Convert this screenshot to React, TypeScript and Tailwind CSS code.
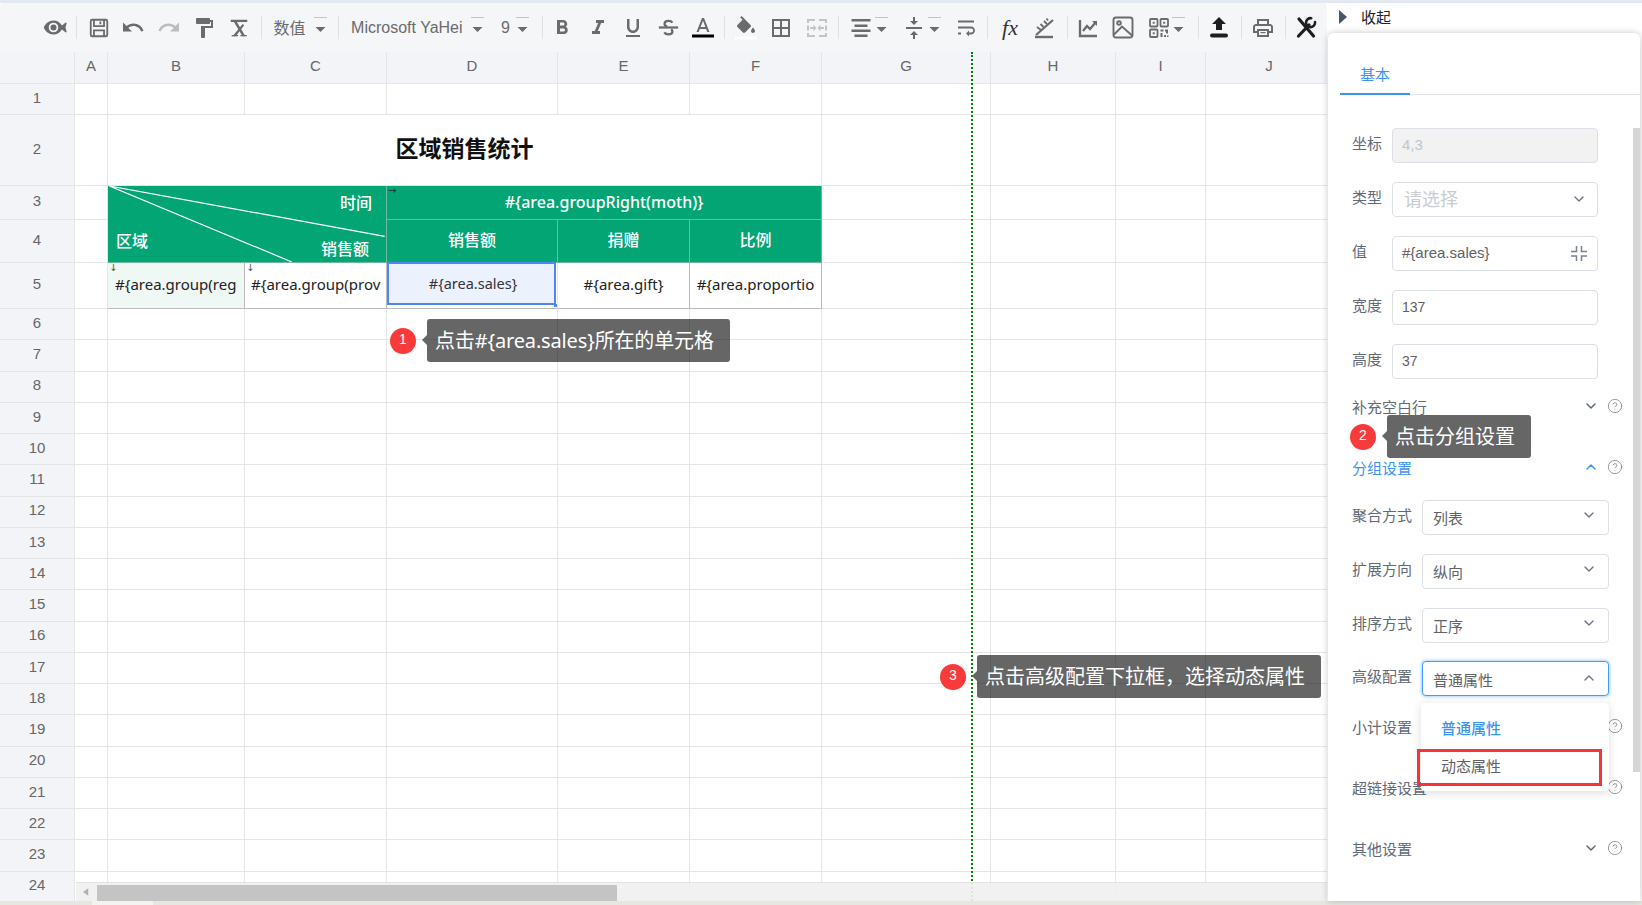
import { ChevronDown, ChevronUp, CircleHelp } from 'lucide-react'
import type { ReactNode } from 'react'

const FONT = "[font-family:'Noto_Sans','Noto_Sans_CJK_SC',sans-serif]"
const ARIAL = "[font-family:'Liberation_Sans','Noto_Sans_CJK_SC',sans-serif]"

function Sep({ className }: { className: string }) {
    return <div className={`w-px h-[23px] bg-[#e0e1e4] shrink-0 ${className}`} />
}

function Caret({ className }: { className: string }) {
    return (
        <svg viewBox="0 0 13 16" className={`w-[13px] h-4 mb-[6px] shrink-0 ${className}`}>
            <rect x="0" y="0" width="13" height="1" fill="#c4c4c4" />
            <path d="M1.5 10h10l-5 5z" fill="#6b6b6b" />
        </svg>
    )
}

function Ico({ className, size = 24, color = '#6b6b6b', children }: { className: string; size?: number; color?: string; children: ReactNode }) {
    return (
        <div className={`w-6 h-6 flex items-center justify-center shrink-0 ${className}`}>
            <svg viewBox="0 0 24 24" width={size} height={size} fill={color} stroke="none">{children}</svg>
        </div>
    )
}

function Toolbar() {
    return (
        <div className="h-[49px] bg-[#f5f6f8] rounded-t-[4px] flex items-center pl-[43px] shrink-0 text-[#6b6b6b]">
            <Ico className="" size={25}>
                <path d="M10.5 5C6 5 2.3 8 .8 12c1.5 4 5.2 7 9.7 7 3.4 0 6.6-1.9 8.5-5l3.7 3 1-.5-1.2-4.500 1.200-4.500-1-.5-3.700 3C17.100 6.900 13.900 5 10.500 5zm0 2.200a4.800 4.800 0 1 1 0 9.600 4.800 4.800 0 0 1 0-9.600z" />
                <circle cx="10.500" cy="12" r="3" />
            </Ico>
            <Sep className="ml-[9px]" />
            <Ico className="ml-[9.5px]" size={22}>
                <path fillRule="evenodd" d="M4.500 2h15A2.500 2.500 0 0 1 22 4.500v15a2.500 2.500 0 0 1-2.500 2.500h-15A2.500 2.500 0 0 1 2 19.500v-15A2.500 2.500 0 0 1 4.500 2zM4 4v16h1.500v-6.500h13V20H20V4h-1.500v7h-13V4zm3.500 0v5h9V4zm5 1h2v3h-2zM7.500 15.500V20h9v-4.500z" />
            </Ico>
            <Ico className="ml-[10.5px]" size={25}>
                <path d="M12.500 8c-2.650 0-5.050.99-6.900 2.600L2 7v9h9l-3.620-3.620c1.390-1.160 3.160-1.880 5.120-1.880 3.540 0 6.550 2.310 7.600 5.500l2.370-.78C21.080 11.030 17.150 8 12.500 8z" />
            </Ico>
            <Ico className="ml-[12px]" size={25} color="#bcbcbc">
                <path d="M18.400 10.600C16.550 8.990 14.150 8 11.500 8c-4.650 0-8.580 3.030-9.960 7.220L3.900 16c1.050-3.190 4.050-5.500 7.600-5.500 1.950 0 3.730.72 5.120 1.880L13 16h9V7l-3.600 3.600z" />
            </Ico>
            <Ico className="ml-[11px]">
                <path d="M18 4V3c0-.55-.45-1-1-1H5c-.55 0-1 .45-1 1v4c0 .55.45 1 1 1h12c.55 0 1-.45 1-1V6h1v4H9v11c0 .55.45 1 1 1h2c.55 0 1-.45 1-1v-9h8V4h-3z" />
            </Ico>
            <Ico className="ml-[10.6px]" size={22}>
                <path d="M3 3h18v2.500H3z" />
                <path d="M6 4.500h3.200L19 21h-3.200z" />
                <path d="M16 7.500l1.700 1.500L8.500 21H5z" />
                <path d="M4 19.500h7v1.500H4zM13.500 19.500h7v1.500h-7z" />
            </Ico>
            <Sep className="ml-[10px]" />
            <span className="ml-[12px] w-8 text-[16px] whitespace-nowrap shrink-0 leading-6">数值</span>
            <Caret className="ml-[8px]" />
            <Sep className="ml-[11px]" />
            <span className={`ml-[12.500px] w-[113px] text-[16px] whitespace-nowrap shrink-0 ${ARIAL}`}>Microsoft YaHei</span>
            <Caret className="ml-[6.500px]" />
            <span className={`ml-[17.500px] w-2 text-[16px] shrink-0 ${ARIAL}`}>9</span>
            <Caret className="ml-[7px]" />
            <Sep className="ml-[12.500px]" />
            <Ico className="ml-[7.500px]" size={30}>
                <path d="M15.600 10.790c.97-.67 1.650-1.770 1.650-2.790 0-2.260-1.750-4-4-4H7v14h7.040c2.090 0 3.710-1.700 3.710-3.790 0-1.520-.86-2.820-2.150-3.420zM10 6.500h3c.83 0 1.500.67 1.500 1.500s-.67 1.500-1.500 1.500h-3v-3zm3.500 9H10v-3h3.500c.83 0 1.500.67 1.500 1.500s-.67 1.500-1.500 1.500z" />
            </Ico>
            <Ico className="ml-[11.600px]" size={26}>
                <path d="M10 4v3h2.210l-3.420 8H6v3h8v-3h-2.210l3.420-8H18V4z" />
            </Ico>
            <Ico className="ml-[11.400px]" size={26}>
                <path d="M12 17c3.310 0 6-2.690 6-6V3h-2.500v8c0 1.930-1.570 3.500-3.500 3.500S8.500 12.930 8.500 11V3H6v8c0 3.310 2.690 6 6 6zm-7 2v2h14v-2H5z" />
            </Ico>
            <Ico className="ml-[11.700px]" size={21}>
                <g fill="none" stroke="#6b6b6b" strokeWidth="2.600">
                    <path d="M16.500 6.500C15.500 5 13.800 4.500 12 4.500c-2.500 0-4.500 1.200-4.500 3.300 0 1.700 1 2.700 3 3.200" />
                    <path d="M15 14c1 .8 1.500 1.500 1.500 2.500 0 2-2 3.300-4.500 3.300-2 0-3.800-.7-4.800-2.300" />
                    <path d="M1 12h22" />
                </g>
            </Ico>
            <Ico className="ml-[10.300px]" size={26}>
                <path d="M11 2 5.500 16h2.250l1.120-3h6.250l1.120 3h2.250L13 2h-2zm-1.380 9L12 4.670 14.380 11H9.620z" />
                <rect x="1" y="18.500" width="22" height="3" fill="#000" />
            </Ico>
            <Sep className="ml-[9.400px]" />
            <Ico className="ml-[8.600px]" size={26}>
                <path d="M16.560 8.940 7.620 0 6.210 1.410l2.380 2.380-5.150 5.150c-.59.59-.59 1.540 0 2.120l5.500 5.500c.29.29.68.44 1.060.44s.77-.15 1.060-.44l5.500-5.500c.59-.58.59-1.530 0-2.120zM19 11.500s-2 2.170-2 3.500c0 1.100.9 2 2 2s2-.9 2-2c0-1.330-2-3.500-2-3.500z" />
                <rect x="1" y="20.500" width="22" height="3" fill="#fff" />
            </Ico>
            <Ico className="ml-[11.400px]" size={26}>
                <path d="M3 3v18h18V3H3zm8 16H5v-6h6v6zm0-8H5V5h6v6zm8 8h-6v-6h6v6zm0-8h-6V5h6v6z" />
            </Ico>
            <Ico className="ml-[11.200px]" size={26} color="#c4c4c4">
                <path d="M2 3h8v2H4v2H2zM14 3h8v4h-2V5h-6zM2 17h2v2h6v2H2zM20 17h2v4h-8v-2h6zM2 9.500h2v5H2zM20 9.500h2v5h-2z" />
                <path d="M5 11h3.500V8.500l3 3.500-3 3.500V13H5zM19 11h-3.500V8.500l-3 3.500 3 3.500V13H19z" />
            </Ico>
            <Sep className="ml-[9.700px]" />
            <Ico className="ml-[9.700px]" size={24}>
                <path d="M2.500 3h19v2.600h-19zM5.500 8.500h13v2.600h-13zM2.500 13.500h19v2.600h-19zM5.500 18.500h13v2.600h-13z" />
            </Ico>
            <Caret className="ml-[2px]" />
            <Ico className="ml-[14px]" size={26}>
                <path d="M8 19h3v4h2v-4h3l-4-4-4 4zm8-14h-3V1h-2v4H8l4 4 4-4zM4 11v2h16v-2H4z" />
            </Ico>
            <Caret className="ml-[1.500px]" />
            <Ico className="ml-[13.300px]" size={25}>
                <path d="M4 19h3v-2H4v2zM20 5H4v2h16V5zm-3 6H4v2h13.250c1.100 0 2 .9 2 2s-.9 2-2 2H15v-2l-3 3 3 3v-2h2c2.210 0 4-1.790 4-4s-1.790-4-4-4z" />
            </Ico>
            <Sep className="ml-[9.700px]" />
            <div className="ml-[9.500px] w-6 h-6 flex items-center justify-center shrink-0 text-[#333] text-[22px] italic [font-family:'Liberation_Serif',serif]">fx</div>
            <Ico className="ml-[10.500px]" size={26}>
                <g fill="none" stroke="#6b6b6b" strokeWidth="2">
                    <path d="M4 19 21 4" strokeWidth="2.200" />
                    <path d="M3 21h18" strokeWidth="2.400" />
                    <path d="M5 11l4 3M8.500 8l3 3M12 5l3 3M14.500 2.500l1.500 2" strokeWidth="1.800" />
                </g>
            </Ico>
            <Sep className="ml-[10.200px]" />
            <Ico className="ml-[8.300px]" size={26}>
                <g fill="none" stroke="#6b6b6b" strokeWidth="2.300">
                    <path d="M4 4v16h17" />
                    <path d="M7 15l4-5 3 3 6-7" />
                </g>
                <path d="M16 5h5v5z" />
            </Ico>
            <Ico className="ml-[11px]" size={27}>
                <g fill="none" stroke="#6b6b6b" strokeWidth="1.900">
                    <rect x="2.500" y="2" width="19" height="20" rx="2.500" />
                    <circle cx="8" cy="7.500" r="1.800" />
                    <path d="M3 19l8-8 10 9" />
                </g>
            </Ico>
            <Ico className="ml-[12px]" size={26}>
                <g fill="none" stroke="#6b6b6b" strokeWidth="1.800">
                    <rect x="3" y="3" width="7.500" height="7.500" rx="1" />
                    <rect x="13.500" y="3" width="7.500" height="7.500" rx="1" />
                    <rect x="3" y="13.500" width="7.500" height="7.500" rx="1" />
                </g>
                <path d="M5.700 5.700h2v2h-2zM16.200 5.700h2v2h-2zM5.700 16.200h2v2h-2zM13.500 13.500h3v2h-3zM18 13.500h3v4h-2v-2h-1zM13.500 17h2v4h-2zM17 19h2v2h-2zM20 19.500h1.500V21H20z" />
            </Ico>
            <Caret className="ml-[1.500px]" />
            <Sep className="ml-[12.100px]" />
            <Ico className="ml-[8.800px]" size={26} color="#1e1e1e">
                <path d="M9 14h6V8h4l-7-7-7 7h4v6z" />
                <rect x="3" y="17.500" width="18" height="4" rx="2" />
            </Ico>
            <Sep className="ml-[10.100px]" />
            <Ico className="ml-[8.500px]" size={28}>
                <path d="M19 8h-1V3H6v5H5c-1.660 0-3 1.340-3 3v6h4v4h12v-4h4v-6c0-1.660-1.340-3-3-3zM8 5h8v3H8V5zm8 14H8v-4h8v4zm2-4v-2H6v2H4v-4c0-.55.45-1 1-1h14c.55 0 1 .45 1 1v4h-2z" />
                <rect x="9.500" y="16" width="5" height="1.200" />
            </Ico>
            <Sep className="ml-[9.600px]" />
            <Ico className="ml-[8.400px]" size={25} color="#1e1e1e">
                <g fill="none" stroke="#1e1e1e" strokeLinecap="round">
                    <path d="M5 3.500 19.500 20.500" strokeWidth="3.200" />
                    <path d="M4.500 20.500 15 9.500" strokeWidth="3.200" />
                    <path d="M21 6.500a4.500 4.500 0 1 1-3.800-3.800" strokeWidth="2.600" />
                </g>
            </Ico>
        </div>
    )
}

const cols = ['A', 'B', 'C', 'D', 'E', 'F', 'G', 'H', 'I', 'J']
const line = 'border-r border-b border-[#e5e5e5]'
const headCell = `${line} bg-[#f3f4f8] flex items-center justify-center pb-[2px] text-[15px] text-[#666] ${ARIAL}`

function Blank({ n }: { n: number }) {
    return <>{Array.from({ length: n }, (_, i) => <div key={i} className={line} />)}</>
}

function RowHead({ n, active }: { n: number; active?: boolean }) {
    return <div className={`${headCell} ${active ? 'bg-[#e6ecf8]' : ''}`}>{n}</div>
}

const greenCell = 'bg-[#03a574] border-r border-b border-[#72b8a0] flex items-center justify-center text-white text-[16px] font-medium'
const dataCell = 'border-r border-b border-[#bbbbbb] flex items-center pb-[2px] text-[15px] text-[#222] whitespace-nowrap overflow-hidden relative'

function Sheet() {
    return (
        <div className="flex-1 relative overflow-hidden">
            <div className="grid grid-cols-[75px_33px_137px_142px_171px_132px_132px_169px_125px_90px_127px] grid-rows-[32px_31px_71px_34px_43px_46px_repeat(19,31.250px)] w-[1333px]">
                <div className={headCell} />
                {cols.map(c => (
                    <div key={c} className={`${headCell} ${c === 'D' ? 'bg-[#e6ecf8]' : ''}`}>{c}</div>
                ))}

                <RowHead n={1} />
                <Blank n={10} />

                <RowHead n={2} />
                <Blank n={1} />
                <div className={`${line} col-span-5 flex items-center justify-center pb-[3px] text-[23px] font-bold text-[#111]`}>区域销售统计</div>
                <Blank n={4} />

                <RowHead n={3} />
                <Blank n={1} />
                <div className="col-span-2 row-span-2 bg-[#03a574] border-r border-b border-[#72b8a0] relative text-white text-[16px] font-medium">
                    <svg viewBox="0 0 279 77" className="absolute inset-0 w-full h-full">
                        <path d="M0 0 279 51M0 0 185 77" stroke="#fff" strokeWidth="1.200" fill="none" />
                    </svg>
                    <span className="absolute right-[14px] top-[5px] leading-6">时间</span>
                    <span className="absolute left-[213px] top-[51px] leading-6">销售额</span>
                    <span className="absolute left-2 top-[43px] leading-6">区域</span>
                </div>
                <div className={`col-span-3 ${greenCell} pb-[2px] relative`}>
                    <span className="absolute left-px top-0 text-[10px] leading-none text-[#26302c] [font-family:'DejaVu_Sans',sans-serif]">→</span>
                    {'#{area.groupRight(moth)}'}
                </div>
                <Blank n={4} />

                <RowHead n={4} />
                <Blank n={1} />
                <div className={`${greenCell} pb-[2px]`}>销售额</div>
                <div className={`${greenCell} pb-[2px]`}>捐赠</div>
                <div className={`${greenCell} pb-[2px]`}>比例</div>
                <Blank n={4} />

                <RowHead n={5} active />
                <Blank n={1} />
                <div className={`${dataCell} bg-[#f0f8f5] pl-[7px]`}>
                    <span className="absolute left-px top-0 text-[10px] leading-none text-[#555] [font-family:'DejaVu_Sans',sans-serif]">↓</span>
                    {'#{area.group(reg'}
                </div>
                <div className={`${dataCell} pl-[6px]`}>
                    <span className="absolute left-px top-0 text-[10px] leading-none text-[#555] [font-family:'DejaVu_Sans',sans-serif]">↓</span>
                    {'#{area.group(prov'}
                </div>
                <div className={`${line} border-b-[#bbbbbb] relative`}>
                    <div className="w-[169px] h-[43px] -mt-px border-2 border-[#4d86f5] bg-[#ebf1fd] flex items-center justify-center pl-[3px] text-[14.500px] text-[#333]">{'#{area.sales}'}</div>
                    <div className="absolute left-[167px] top-[41px] w-[3px] h-[3px] bg-[#4d86f5]" />
                </div>
                <div className={`${dataCell} justify-center`}>{'#{area.gift}'}</div>
                <div className={`${dataCell} justify-center`}>{'#{area.proportio'}</div>
                <Blank n={4} />

                {Array.from({ length: 19 }, (_, i) => (
                    <div key={i} className="contents">
                        <RowHead n={i + 6} />
                        <Blank n={10} />
                    </div>
                ))}
            </div>

            {/* print boundary */}
            <div className="absolute left-[971px] top-0 bottom-0 w-0 border-l-2 border-dotted border-[#008000]" />

            <div className="absolute left-[76px] right-0 bottom-0 h-[19px] bg-[#f0f0f0]/90 border-t border-[#e3e3e3] flex items-end">
                <svg viewBox="0 0 8 10" className="w-[6px] h-2 ml-[7px] mb-[5px] shrink-0"><path d="M7 0v10L0 5z" fill="#b0b0b0" /></svg>
                <div className="ml-[8px] w-[520px] h-4 bg-[#c4c4c4] shrink-0" />
            </div>
        </div>
    )
}

function Field({ label, children }: { label: string; children: ReactNode }) {
    return (
        <div className="flex items-center h-[35px] mb-[19px]">
            <span className="w-10 text-[15px] text-[#606a78] pb-1 whitespace-nowrap">{label}</span>
            {children}
        </div>
    )
}

function Select({ label, className, children, open }: { label: string; className: string; children?: ReactNode; open?: boolean }) {
    return (
        <div className={`flex items-center h-[35px] relative ${className}`}>
            <span className="w-[70px] text-[15px] text-[#606a78] pb-1 whitespace-nowrap">{label}</span>
            <div className={`w-[187px] h-full rounded-[4px] bg-white flex items-center justify-between pl-[10px] pr-[11px] border ${open ? 'border-[#409eff] shadow-[0_0_3px_1px_#a9d2fb]' : 'border-[#dcdfe6]'}`}>
                <span className="text-[15px] text-[#606266] pt-[3px]">{children}</span>
                {open
                    ? <ChevronUp size={16} strokeWidth={2} className="text-[#6b7280] -mt-px" />
                    : <ChevronDown size={16} strokeWidth={2} className="text-[#6b7280] -mt-1" />}
            </div>
        </div>
    )
}

function Section({ label, className, blue, up, noChevron }: { label: string; className: string; blue?: boolean; up?: boolean; noChevron?: boolean }) {
    return (
        <div className={`flex items-center justify-between h-5 w-[271px] ${className}`}>
            <span className={`text-[15px] whitespace-nowrap ${blue ? 'text-[#3c94f0]' : 'text-[#606a78]'}`}>{label}</span>
            <div className="flex items-center gap-[8px] -mt-[3px]">
                {noChevron
                    ? null
                    : up
                        ? <ChevronUp size={16} strokeWidth={2.200} className="text-[#3c94f0]" />
                        : <ChevronDown size={16} strokeWidth={2.200} className="text-[#5b6675]" />}
                <CircleHelp size={16} strokeWidth={1.100} className="text-[#777]" />
            </div>
        </div>
    )
}

function Panel() {
    return (
        <div className="w-[315px] shrink-0 flex flex-col bg-white">
            <div className="h-[30px] flex items-center pl-[12px] pb-[2px] shrink-0">
                <svg viewBox="0 0 8 14" className="w-2 h-[14px] shrink-0"><path d="M0 0l8 7-8 7z" fill="#46566b" /></svg>
                <span className="ml-[14px] text-[15px] text-[#222]">收起</span>
            </div>
            <div className="flex-1 ml-px rounded-t-[6px] bg-white shadow-[0_0_7px_rgba(0,0,0,0.22)] relative overflow-hidden mr-[2px]">
                <div className="ml-[12px] h-[62px] border-b border-[#dfe2e8] flex items-end">
                    <div className="w-[70px] h-[62px] border-b-2 -mb-px border-[#3c94f0] flex items-end justify-center pb-[8px] text-[15px] text-[#3c94f0]">基本</div>
                </div>
                <div className="absolute right-0 top-[95px] bottom-[129px] w-[7px] bg-[#d6d6d6]" />
                <div className="pl-[24px] pt-[32.500px]">
                    <Field label="坐标">
                        <div className={`w-[206px] h-full rounded-[4px] border border-[#dcdfe6] bg-[#f2f2f2] flex items-center pl-[9px] text-[15px] text-[#c0c4cc] ${ARIAL}`}>4,3</div>
                    </Field>
                    <Field label="类型">
                        <div className="w-[206px] h-full rounded-[4px] border border-[#dcdfe6] flex items-center justify-between pl-[11px] pr-[10px]">
                            <span className="text-[18px] text-[#c9ccd3]">请选择</span>
                            <ChevronDown size={16} strokeWidth={2} className="text-[#6b7280]" />
                        </div>
                    </Field>
                    <Field label="值">
                        <div className={`w-[206px] h-full rounded-[4px] border border-[#dcdfe6] flex items-center justify-between pl-[9px] pr-[10px] text-[15px] text-[#606266] ${ARIAL}`}>
                            <span>{'#{area.sales}'}</span>
                            <svg viewBox="0 0 16 16" className="w-4 h-4 mt-[2px]" fill="none" stroke="#7a8290" strokeWidth="1.500"><path d="M5.500 0v5.500H0M10.500 0v5.500H16M5.500 15v-5H0M10.500 15v-5H16" /></svg>
                        </div>
                    </Field>
                    <Field label="宽度">
                        <div className={`w-[206px] h-full rounded-[4px] border border-[#dcdfe6] flex items-center pl-[9px] text-[14px] text-[#606266] ${ARIAL}`}>137</div>
                    </Field>
                    <Field label="高度">
                        <div className={`w-[206px] h-full rounded-[4px] border border-[#dcdfe6] flex items-center pl-[9px] text-[14px] text-[#606266] ${ARIAL}`}>37</div>
                    </Field>
                    <Section label="补充空白行" className="mt-[1.500px]" />
                    <Section label="分组设置" blue up className="mt-[41px]" />
                    <Select label="聚合方式" className="mt-[21px]">列表</Select>
                    <Select label="扩展方向" className="mt-[19px]">纵向</Select>
                    <Select label="排序方式" className="mt-[19px]">正序</Select>
                    <Select label="高级配置" className="mt-[18.500px]" open>普通属性</Select>
                    <Section label="小计设置" noChevron className="mt-[21px]" />
                    <Section label="超链接设置" noChevron className="mt-[41px]" />
                    <Section label="其他设置" className="mt-[41px]" />
                </div>
                {/* open select menu */}
                <div className="absolute left-[93px] top-[670px] w-[188px] h-[88px] bg-white rounded-[4px] shadow-[0_2px_10px_rgba(0,0,0,0.14)] pt-[6px] pl-[20px] text-[15px]">
                    <div className="h-[38.500px] flex items-center text-[#3c94f0] font-medium">普通属性</div>
                    <div className="h-[38.500px] flex items-center pb-[2px] text-[#606266]">动态属性</div>
                    <div className="absolute -left-[4px] top-[46px] w-[185px] h-[37px] border-[3px] border-[#f33535]" />
                </div>
            </div>
        </div>
    )
}

function Tip({ n, className, boxClass, children }: { n: number; className: string; boxClass: string; children: ReactNode }) {
    return (
        <div className={`absolute flex items-center gap-[11px] ${className}`}>
            <div className={`w-[26px] h-[26px] rounded-full bg-[#f93a3a] text-white text-[14px] flex items-center justify-center pb-[2px] shrink-0 ${ARIAL}`}>{n}</div>
            <div className={`relative h-[43px] bg-black/60 rounded-[3px] flex items-center pl-2 text-[20px] text-white whitespace-nowrap ${boxClass}`}>
                <div className="absolute -left-[5px] top-[16px] w-0 h-0 border-y-[5px] border-y-transparent border-r-[5px] border-r-[#666]" />
                {children}
            </div>
        </div>
    )
}

export default function App() {
    return (
        <div className={`w-[1642px] h-[905px] flex flex-col overflow-hidden relative bg-[#e4e8f2] ${FONT}`}>
            <div className="h-[3px] shrink-0" />
            <div className="flex-1 flex min-h-0 bg-white">
                <div className="w-[1327px] shrink-0 flex flex-col min-h-0">
                    <Toolbar />
                    <Sheet />
                </div>
                <Panel />
            </div>
            <div className="h-1 shrink-0 flex bg-[#e7e7e2]">
                <div className="w-[92px]" />
                <div className="w-[61px] bg-[#f3f3f1]" />
            </div>

            <Tip n={1} className="left-[390px] top-[319px]" boxClass="w-[303px] tracking-[-0.15px]">{'点击#{area.sales}所在的单元格'}</Tip>
            <Tip n={2} className="left-[1350px] top-[415px]" boxClass="w-[144px] pt-px">点击分组设置</Tip>
            <Tip n={3} className="left-[940px] top-[655px]" boxClass="w-[344px] pt-px">点击高级配置下拉框，选择动态属性</Tip>
        </div>
    )
}
